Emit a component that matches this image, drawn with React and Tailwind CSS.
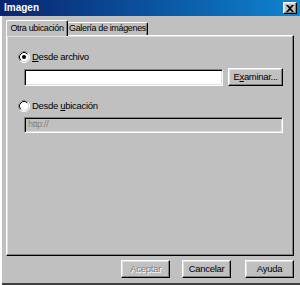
import React from 'react';

const raised = 'border border-t-white border-l-white border-r-black border-b-black shadow-[inset_-1px_-1px_#808080,inset_1px_1px_#dfdfdf]';
const sunken = 'border border-t-[#808080] border-l-[#808080] border-r-white border-b-white shadow-[inset_1px_1px_#000,inset_-1px_-1px_#dfdfdf]';

const Radio = ({ checked }) => (
  <svg width="12" height="12" viewBox="0 0 12 12" className="shrink-0">
    <circle cx="6" cy="6" r="5.5" fill="none" stroke="#fff" />
    <path d="M2.11 9.89 A5.5 5.5 0 0 1 9.89 2.11" fill="none" stroke="#808080" />
    <circle cx="6" cy="6" r="4.5" fill="#fff" stroke="#dfdfdf" />
    <path d="M2.82 9.18 A4.5 4.5 0 0 1 9.18 2.82" fill="none" stroke="#000" />
    {checked && <circle cx="6" cy="6" r="2" fill="#000" />}
  </svg>
);

const Button = ({ children, disabled, className = '' }) => (
  <button
    type="button"
    className={`${raised} h-[18px] bg-[#c0c0c0] leading-none whitespace-nowrap flex items-center justify-center ${disabled ? 'text-[#808080] [text-shadow:1px_1px_#fff]' : 'text-black'} ${className}`}
  >
    {children}
  </button>
);

export default function App() {
  return (
    <div className="w-[300px] h-[285px] bg-[#c0c0c0] flex flex-col font-['Liberation_Sans',Arial,sans-serif] text-[9.5px] tracking-[-0.3px] text-black overflow-hidden shadow-[inset_2px_0_#fff,inset_0_-2px_#404040]">
      {/* title bar */}
      <div className="h-[16px] bg-gradient-to-r from-[#0a2470] to-[#1084d0] flex items-center justify-between pl-[4px] pr-[3px]">
        <span className="text-white font-bold text-[10px] tracking-normal leading-none">Imagen</span>
        <div className={`${raised} w-[14px] h-[12px] bg-[#c0c0c0] flex items-center justify-center`}>
          <svg width="8" height="7" viewBox="0 0 8 7">
            <path d="M0 0h2l2 2 2-2h2L5 3.5 8 7H6L4 5 2 7H0l3-3.5z" fill="#000" />
          </svg>
        </div>
      </div>

      {/* tabs */}
      <div className="flex items-end pl-[6px] mt-[4px] whitespace-nowrap text-[9px] tracking-[-0.35px]">
        <div className="relative z-10 -mb-px h-[16px] w-[62px] bg-[#c0c0c0] border-t border-l border-t-white border-l-white border-r border-r-black shadow-[inset_-1px_0_#808080] rounded-t-[2px] flex items-center justify-center">
          Otra ubicación
        </div>
        <div className="h-[13px] w-[80px] border-t border-t-white border-r border-r-black shadow-[inset_-1px_0_#808080] rounded-tr-[2px] flex items-center justify-center">
          Galería de imágenes
        </div>
      </div>

      {/* panel */}
      <div className={`${raised} ml-[6px] w-[288px] h-[221px] flex flex-col pl-[11px] pt-[15px]`}>
        <div className="flex items-center h-[12px] gap-[2px]">
          <Radio checked />
          <span><span className="underline">D</span>esde archivo</span>
        </div>
        <div className="flex items-center mt-[5px] ml-[6px] gap-[5px]">
          <div className={`${sunken} w-[199px] h-[17px] bg-white`} />
          <Button className="w-[55px] h-[17px]">
            E<span className="underline">x</span>aminar...
          </Button>
        </div>

        <div className="flex items-center h-[12px] gap-[2px] mt-[14px]">
          <Radio />
          <span>Desde <span className="underline">u</span>bicación</span>
        </div>
        <div className={`${sunken} mt-[5px] ml-[6px] w-[259px] h-[16px] bg-[#c0c0c0] flex items-center pl-[3px] text-[9px] text-[#808080]`}>
          http://
        </div>
      </div>

      {/* bottom buttons */}
      <div className="flex mt-[4px]">
        <Button disabled className="ml-[121px] w-[49px]">Aceptar</Button>
        <Button className="ml-[12px] w-[49px]">Cancelar</Button>
        <Button className="ml-[14px] w-[49px]">Ayuda</Button>
      </div>
    </div>
  );
}
